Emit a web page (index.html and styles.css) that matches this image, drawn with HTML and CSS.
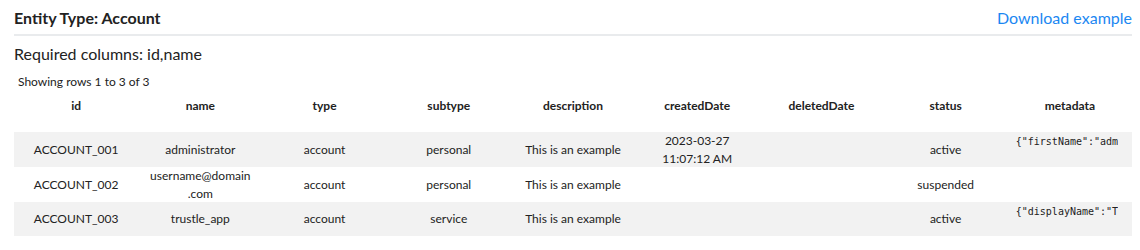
FILE: index.html
```html
<!DOCTYPE html>
<html lang="en">
<head>
    <meta charset="UTF-8">
    <title>Entity Type: Account</title>
    <link rel="stylesheet" href="styles.css">
</head>
<body>
    <div class="entity-panel">
        <div class="entity-header">
            <div class="entity-title">Entity Type: Account</div>
            <a class="download-link" href="#">Download example</a>
        </div>

        <div class="required-columns">Required columns: id,name</div>
        <div class="row-count">Showing rows 1 to 3 of 3</div>

        <table class="example-table">
            <thead>
                <tr>
                    <th>id</th>
                    <th>name</th>
                    <th>type</th>
                    <th>subtype</th>
                    <th>description</th>
                    <th>createdDate</th>
                    <th>deletedDate</th>
                    <th>status</th>
                    <th>metadata</th>
                </tr>
            </thead>
            <tbody>
                <tr>
                    <td>ACCOUNT_001</td>
                    <td>administrator</td>
                    <td>account</td>
                    <td>personal</td>
                    <td>This is an example</td>
                    <td>2023-03-27<br>11:07:12 AM</td>
                    <td></td>
                    <td>active</td>
                    <td class="json-cell"><div class="json-value">{"firstName":"administrator","lastName":"user"}</div></td>
                </tr>
                <tr>
                    <td>ACCOUNT_002</td>
                    <td>username@domain<br>.com</td>
                    <td>account</td>
                    <td>personal</td>
                    <td>This is an example</td>
                    <td></td>
                    <td></td>
                    <td>suspended</td>
                    <td class="json-cell"></td>
                </tr>
                <tr>
                    <td>ACCOUNT_003</td>
                    <td>trustle_app</td>
                    <td>account</td>
                    <td>service</td>
                    <td>This is an example</td>
                    <td></td>
                    <td></td>
                    <td>active</td>
                    <td class="json-cell"><div class="json-value">{"displayName":"Trustle App"}</div></td>
                </tr>
            </tbody>
        </table>
    </div>
</body>
</html>
```

FILE: styles.css
```css
body {
    margin: 0;
    font-family: Lato, "Open Sans", sans-serif;
    color: #222;
    background-color: #fff;
}

.entity-panel {
    padding: 0 8px 0 14px;
}

.entity-header {
    display: flex;
    justify-content: space-between;
    align-items: center;
    height: 34px;
    border-bottom: 2px solid #e9ebed;
}

.entity-title {
    font-size: 16px;
    font-weight: bold;
    color: #222;
}

.download-link {
    font-size: 16px;
    color: #1b87f2;
    text-decoration: none;
}

.required-columns {
    margin-top: 8px;
    font-size: 16px;
    line-height: 20px;
}

.row-count {
    margin-top: 10px;
    padding-left: 4px;
    font-size: 12px;
    line-height: 16px;
}

.example-table {
    width: 1118px;
    margin-top: 4px;
    table-layout: fixed;
    border-collapse: collapse;
    font-size: 12px;
    line-height: 17.5px;
}

.example-table th {
    height: 35px;
    padding: 3px 8px 0;
    vertical-align: top;
    font-weight: bold;
    font-size: 12px;
}

.example-table td {
    height: 34px;
    padding: 0 8px;
    text-align: center;
}

.example-table tbody tr:nth-child(odd) {
    background-color: #f2f2f2;
}

.example-table td.json-cell {
    height: 31px;
    vertical-align: top;
    text-align: left;
    padding: 3px 14px 0 8px;
}

.json-value {
    overflow: hidden;
    white-space: nowrap;
    font-family: "DejaVu Sans Mono", monospace;
    font-size: 10px;
    line-height: 13px;
}
```
